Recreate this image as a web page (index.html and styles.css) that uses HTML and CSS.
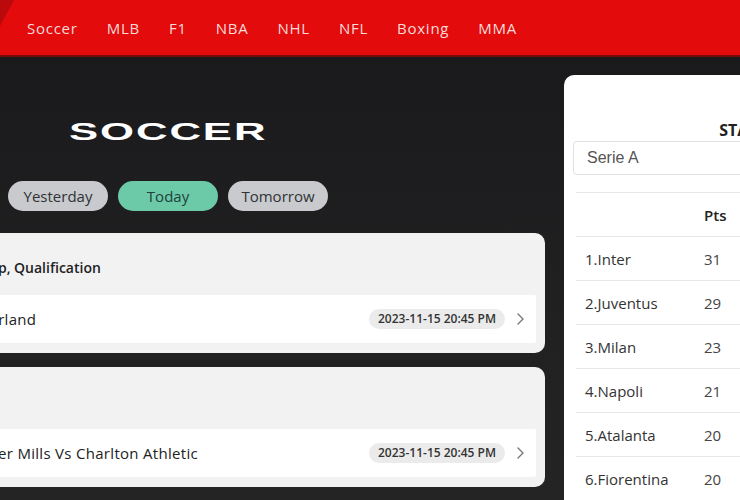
FILE: index.html
```html
<!DOCTYPE html>
<html lang="en">
<head>
<meta charset="utf-8">
<title>Soccer</title>
<link rel="stylesheet" href="styles.css">
</head>
<body>
<header class="topbar">
  <nav class="nav">
    <a class="nav-link" href="#">Soccer</a>
    <a class="nav-link" href="#">MLB</a>
    <a class="nav-link" href="#">F1</a>
    <a class="nav-link" href="#">NBA</a>
    <a class="nav-link" href="#">NHL</a>
    <a class="nav-link" href="#">NFL</a>
    <a class="nav-link" href="#">Boxing</a>
    <a class="nav-link" href="#">MMA</a>
  </nav>
</header>

<div class="main">
  <section class="schedule">
    <div class="hero">
      <div class="hero-inner">
        <h1 class="logo"><span class="logo-text">SOCCER</span></h1>
        <div class="days">
          <button class="day">Yesterday</button>
          <button class="day day-active">Today</button>
          <button class="day">Tomorrow</button>
        </div>
      </div>
    </div>

    <div class="league">
      <div class="league-title">Championship, Qualification</div>
      <a class="match" href="#">
        <span class="teams">Israel Vs Switzerland</span>
        <span class="kickoff">2023-11-15 20:45 PM</span>
        <svg class="chevron" width="7" height="12" viewBox="0 0 7 12"><path d="M1 1l5 5-5 5" fill="none" stroke="#777" stroke-width="1.4" stroke-linecap="round" stroke-linejoin="round"/></svg>
      </a>
    </div>

    <div class="league">
      <div class="league-title">FA Cup</div>
      <a class="match" href="#">
        <span class="teams">Cray Valley Paper Mills Vs Charlton Athletic</span>
        <span class="kickoff">2023-11-15 20:45 PM</span>
        <svg class="chevron" width="7" height="12" viewBox="0 0 7 12"><path d="M1 1l5 5-5 5" fill="none" stroke="#777" stroke-width="1.4" stroke-linecap="round" stroke-linejoin="round"/></svg>
      </a>
    </div>
  </section>

  <aside class="standings">
    <h2 class="standings-title">STANDINGS</h2>
    <div class="select">Serie A</div>
    <div class="table">
      <div class="row row-head"><span class="team"></span><span class="pts">Pts</span></div>
      <div class="row"><span class="team">1.Inter</span><span class="pts">31</span></div>
      <div class="row"><span class="team">2.Juventus</span><span class="pts">29</span></div>
      <div class="row"><span class="team">3.Milan</span><span class="pts">23</span></div>
      <div class="row"><span class="team">4.Napoli</span><span class="pts">21</span></div>
      <div class="row"><span class="team">5.Atalanta</span><span class="pts">20</span></div>
      <div class="row"><span class="team">6.Fiorentina</span><span class="pts">20</span></div>
    </div>
  </aside>
</div>
</body>
</html>
```

FILE: styles.css
```css
* { box-sizing: border-box; }

html, body {
  margin: 0;
  padding: 0;
}

body {
  width: 740px;
  height: 500px;
  overflow: hidden;
  background: linear-gradient(180deg, #141217 0px, #19181c 20px, #1c1c1e 120px, #202021 300px, #242424 500px);
  font-family: "Open Sans", "Noto Sans", sans-serif;
}

/* top red navigation bar */
.topbar {
  position: relative;
  height: 57px;
  background: #e30b0b;
  border-bottom: 2px solid #7a0a0a;
}

.topbar::before {
  content: "";
  position: absolute;
  left: 0;
  top: 0;
  width: 14px;
  height: 26px;
  background: #bb0a0c;
  clip-path: polygon(0 0, 100% 0, 0 100%);
}

.nav {
  display: flex;
  align-items: center;
  gap: 29px;
  height: 55px;
  padding-left: 27px;
}

.nav-link {
  color: #f6dada;
  text-decoration: none;
  font-size: 15px;
  font-weight: 500;
  letter-spacing: 0.75px;
}

/* page body: schedule column + standings panel */
.main {
  display: flex;
  align-items: flex-start;
  gap: 19px;
  margin-left: -134px;
  padding-top: 18px;
}

.schedule {
  flex: 0 0 679px;
  display: flex;
  flex-direction: column;
}

.hero {
  padding: 46px 0 22px 142px;
}

.hero-inner {
  display: inline-flex;
  flex-direction: column;
  align-items: center;
}

.logo {
  margin: 0;
  height: 22px;
  line-height: 22px;
  font-family: "Liberation Sans", Arial, sans-serif;
  font-size: 23px;
  font-weight: 700;
  color: #fff;
}

.logo-text {
  display: inline-block;
  letter-spacing: 1px;
  transform: scaleX(1.9);
  transform-origin: center;
}

.days {
  display: flex;
  gap: 10px;
  margin-top: 38px;
}

.day {
  width: 100px;
  height: 30px;
  border: 0;
  border-radius: 15px;
  background: #c8cacd;
  color: #303236;
  font-family: "Open Sans", "Noto Sans", sans-serif;
  font-size: 15px;
  padding: 0;
}

.day-active {
  background: #6ccaa9;
  color: #22423a;
}

/* league cards */
.league {
  background: #f2f2f2;
  border-radius: 10px;
  padding: 25px 9px 10px;
  margin-bottom: 14px;
}

.league-title {
  padding-left: 34px;
  height: 20px;
  line-height: 20px;
  font-size: 14px;
  font-weight: 600;
  color: #222;
  margin-bottom: 17px;
}

.match {
  display: flex;
  align-items: center;
  height: 48px;
  padding: 0 12px;
  background: #fff;
  border-radius: 2px;
  text-decoration: none;
}

.teams {
  font-size: 15px;
  letter-spacing: 0.3px;
  color: #222;
}

.kickoff {
  margin-left: auto;
  height: 20px;
  line-height: 20px;
  padding: 0 9px;
  border-radius: 10px;
  background: #ebebeb;
  color: #333;
  font-size: 12px;
  font-weight: 600;
}

.chevron {
  margin-left: 12px;
}

/* standings panel */
.standings {
  flex: 0 0 394px;
  background: #fff;
  border-radius: 10px;
  padding: 45px 0 0 9px;
  height: 440px;
}

.standings-title {
  margin: 0;
  height: 20px;
  line-height: 20px;
  text-align: center;
  font-size: 16px;
  font-weight: 700;
  color: #222;
}

.select {
  margin-top: 1px;
  height: 34px;
  line-height: 32px;
  border: 1px solid #e0e0e0;
  border-radius: 4px;
  padding-left: 13px;
  font-family: "Liberation Sans", Arial, sans-serif;
  font-size: 16px;
  color: #555;
}

.table {
  margin: 17px 0 0 3px;
  border-top: 1px solid #e6e6e6;
}

.row {
  display: grid;
  grid-template-columns: 128px 60px 1fr;
  align-items: center;
  height: 44px;
  border-bottom: 1px solid #e6e6e6;
  font-size: 15px;
  color: #333;
}

.team {
  padding-left: 9px;
}

.pts {
  color: #444;
}

.row-head .pts {
  font-weight: 600;
  color: #222;
}
```
